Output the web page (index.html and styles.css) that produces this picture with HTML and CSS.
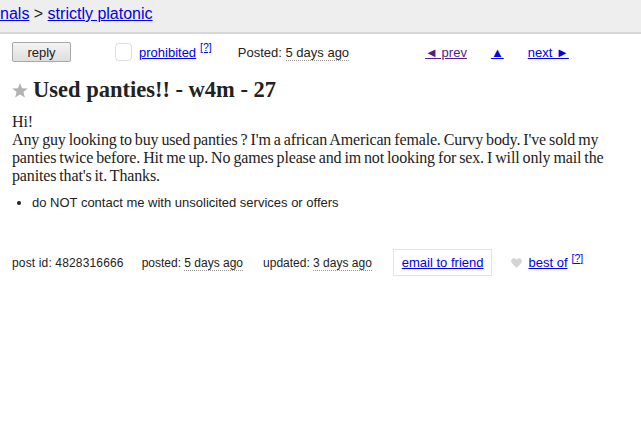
FILE: index.html
```html
<!DOCTYPE html>
<html>
<head>
<meta charset="utf-8">
<link rel="stylesheet" href="styles.css">
</head>
<body>
<header class="crumbs">
  <div class="crumb-line"><a href="#">personals</a> &gt; <a href="#">strictly platonic</a></div>
</header>
<section class="actions">
  <button class="reply">reply</button>
  <span class="flag"><span class="box"></span><a href="#">prohibited</a><sup><a class="help" href="#">[?]</a></sup></span>
  <span class="posted">Posted: <time class="dotted">5 days ago</time></span>
  <nav class="pager">
    <a class="prev" href="#">◄ prev</a>
    <a class="up" href="#">▲</a>
    <a class="next" href="#">next ►</a>
  </nav>
</section>
<h2 class="title"><svg class="star" width="16" height="15" viewBox="0 0 16 15"><polygon points="8,0 10.1,5.2 15.8,5.5 11.4,9.1 12.9,14.6 8,11.5 3.1,14.6 4.6,9.1 0.2,5.5 5.9,5.2" fill="#b3b3b3"/></svg><span>Used panties!! - w4m - 27</span></h2>
<div class="body">Hi!<br>Any guy looking to buy used panties ? I'm a african American female. Curvy body. I've sold my panties twice before. Hit me up. No games please and im not looking for sex. I will only mail the panites that's it. Thanks.</div>
<ul class="notices">
  <li>do NOT contact me with unsolicited services or offers</li>
</ul>
<footer class="postinfo">
  <span>post id: 4828316666</span>
  <span>posted: <time class="dotted">5 days ago</time></span>
  <span>updated: <time class="dotted">3 days ago</time></span>
  <a class="email" href="#">email to friend</a>
  <span class="bestof"><svg class="heart" width="11" height="10" viewBox="0 0 11 10"><path d="M5.5 10 L1 5.2 C-0.6 3.4 0.2 0.3 2.8 0.2 C4.1 0.1 5 1 5.5 1.9 C6 1 6.9 0.1 8.2 0.2 C10.8 0.3 11.6 3.4 10 5.2 Z" fill="#d4d4d4"/></svg><a href="#">best of</a><sup><a class="help" href="#">[?]</a></sup></span>
</footer>
</body>
</html>
```
FILE: styles.css
```css
html, body { margin: 0; padding: 0; background: #fff; }
body { font-family: "Liberation Sans", Arial, sans-serif; color: #222; width: 641px; overflow: hidden; }
a { color: #00e; }

.crumbs { height: 32px; background: #eee; border-bottom: 2px solid #d6d6d6; overflow: hidden; }
.crumb-line { font-size: 16px; line-height: 20px; padding-top: 4px; margin-left: -40px; white-space: nowrap; color: #222; }

.actions { display: flex; align-items: center; height: 20px; margin: 8px 0 0 12px; font-size: 13px; }
.reply { width: 59px; height: 20px; padding: 0; font: 13px "Liberation Sans", Arial, sans-serif; color: #222; border: 1px solid #a8a8a8; border-radius: 2px; background: linear-gradient(#f4f4f4, #dedede); }
.flag { display: flex; align-items: center; margin-left: 44px; }
.box { width: 15px; height: 16px; border: 1px solid #ddd; border-radius: 4px; margin-right: 7px; }
sup { font-size: 10.5px; line-height: 0; position: relative; top: -5px; vertical-align: baseline; margin-left: 4px; }
.help { color: #00e; }
.posted { margin-left: 26px; }
.dotted { border-bottom: 1px dotted #999; }
.pager { display: flex; margin-left: 76px; }
.prev { color: #551a8b; }
.up { margin-left: 24px; }
.next { margin-left: 24px; }

.title { display: flex; align-items: center; margin: 15px 0 0 12px; font: bold 22.5px/26px "Liberation Serif", "Times New Roman", serif; color: #222; }
.star { margin-right: 5px; }

.body { margin: 10px 0 0 12px; font: 16px/18px "Liberation Serif", "Times New Roman", serif; color: #222; letter-spacing: -0.15px; word-spacing: -0.8px; }

.notices { margin: 10px 0 0 0; padding-left: 32px; font-size: 13px; line-height: 16px; }

.postinfo { display: flex; align-items: center; margin: 38px 0 0 12px; font-size: 12px; }
.postinfo > span:nth-child(2) { margin-left: 18px; }
.postinfo > span:nth-child(3) { margin-left: 20px; }
.postinfo > span:first-child { letter-spacing: 0.15px; }
.email { margin-left: 21px; padding: 5px 8px 5px 8px; border: 1px solid #e4e4e4; font-size: 13px; }
.bestof { display: flex; align-items: center; margin-left: 19px; font-size: 13px; }
.heart { margin-right: 6px; }
```
